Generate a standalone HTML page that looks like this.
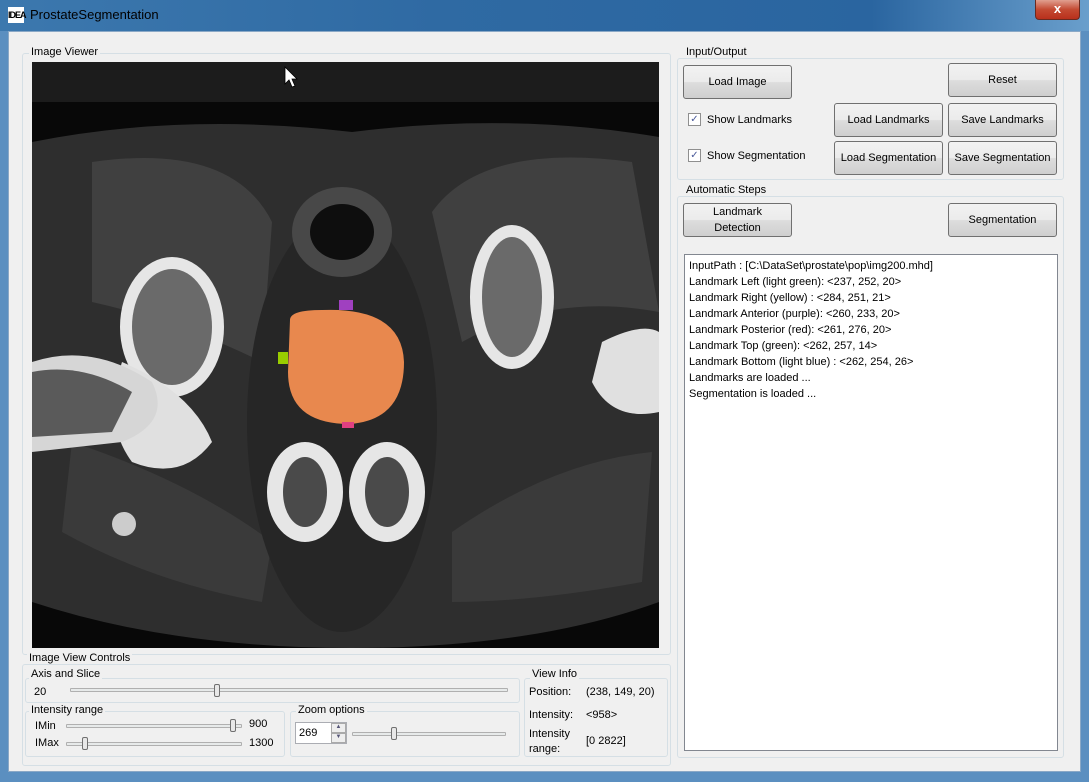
<!DOCTYPE html>
<html><head><style>
*{margin:0;padding:0;box-sizing:border-box}
body{width:1089px;height:782px;overflow:hidden;background:#5b8fc0;font-family:"Liberation Sans",sans-serif;font-size:11px;color:#000;position:relative}
.abs{position:absolute}
.title{left:0;top:0;width:1089px;height:31px;background:linear-gradient(90deg,#3c78ae 0%,#2f6aa3 40%,#2a65a0 80%,#6a9fcc 100%)}
.client{left:8px;top:31px;width:1073px;height:741px;background:#f0f0f0;border:1px solid #8aa8c6}
.grp{position:absolute;border:1px solid #d5dfe5;border-radius:3px}
.lbl{position:absolute;background:#f0f0f0;padding:0 2px;white-space:nowrap}
.btn{position:absolute;border:1px solid #707070;border-radius:3px;background:linear-gradient(#f2f2f2 0%,#ebebeb 50%,#dddddd 51%,#cfcfcf 100%);text-align:center;display:flex;align-items:center;justify-content:center;line-height:16px}
.chk{position:absolute;width:13px;height:13px;border:1px solid #8f8f8f;background:#fff;font-size:10px;line-height:11px;text-align:center;color:#4a5a9a}
.track{position:absolute;height:4px;border:1px solid #b0b0b0;background:#e7eaea;border-radius:1px}
.thumb{position:absolute;width:6px;height:13px;border:1px solid #707070;background:#e8e8e8;border-radius:2px}
.t{position:absolute;white-space:nowrap}
</style></head><body>
<div class="abs title"></div>
<div class="abs" style="left:8px;top:7px;width:16px;height:16px;background:#fff;font:bold 9px 'Liberation Sans';letter-spacing:-1px;line-height:16px;color:#000">IDEA</div>
<div class="t" style="left:30px;top:7px;font-size:13px;color:#000">ProstateSegmentation</div>
<div class="abs" style="left:1035px;top:0;width:45px;height:20px;background:linear-gradient(#e0a090,#c44a32 50%,#b8301c);border:1px solid #6a2a20;border-top:none;border-radius:0 0 4px 4px;color:#fff;font-weight:bold;text-align:center;line-height:18px;font-size:13px">x</div>
<div class="abs client"></div>

<div class="grp" style="left:22px;top:53px;width:649px;height:602px"></div>
<div class="lbl" style="left:29px;top:46px">Image Viewer</div>
<svg class="abs" style="left:32px;top:62px" width="627" height="586" viewBox="0 0 627 586">
<rect width="627" height="586" fill="#080808"/>
<rect x="0" y="0" width="627" height="40" fill="#1c1c1c"/>
<path d="M0 80 Q150 50 320 70 Q480 50 627 75 L627 540 Q500 586 320 586 Q140 586 0 540Z" fill="#2e2e2e"/>
<path d="M60 100 Q200 80 240 160 L230 300 Q150 260 60 240Z" fill="#404040"/>
<path d="M400 150 Q450 80 600 100 L627 250 Q520 230 430 280Z" fill="#404040"/>
<path d="M40 380 Q160 420 240 480 L230 540 Q120 520 30 470Z" fill="#3a3a3a"/>
<path d="M420 470 Q520 400 620 390 L610 520 Q500 540 420 540Z" fill="#3a3a3a"/>
<ellipse cx="310" cy="360" rx="95" ry="210" fill="#262626"/>
<ellipse cx="310" cy="170" rx="50" ry="45" fill="#484848"/>
<ellipse cx="310" cy="170" rx="32" ry="28" fill="#0e0e0e"/>
<ellipse cx="140" cy="265" rx="52" ry="70" fill="#e6e6e6"/>
<ellipse cx="140" cy="265" rx="40" ry="58" fill="#6a6a6a"/>
<path d="M90 300 Q160 330 180 380 Q150 420 100 400 Q70 360 90 300Z" fill="#e0e0e0"/>
<path d="M0 300 Q60 280 120 320 Q140 360 90 380 L0 390Z" fill="#d6d6d6"/>
<path d="M0 310 Q50 300 100 330 L80 370 L0 375Z" fill="#5a5a5a"/>
<ellipse cx="480" cy="235" rx="42" ry="72" fill="#e6e6e6"/>
<ellipse cx="480" cy="235" rx="30" ry="60" fill="#6a6a6a"/>
<path d="M570 280 Q610 260 627 270 L627 350 Q580 360 560 320Z" fill="#e0e0e0"/>
<ellipse cx="273" cy="430" rx="38" ry="50" fill="#e6e6e6"/>
<ellipse cx="273" cy="430" rx="22" ry="35" fill="#4a4a4a"/>
<ellipse cx="355" cy="430" rx="38" ry="50" fill="#e6e6e6"/>
<ellipse cx="355" cy="430" rx="22" ry="35" fill="#4a4a4a"/>
<circle cx="92" cy="462" r="12" fill="#ccc"/>
<path d="M258 258 Q258 248 290 248 Q370 245 372 300 Q372 358 318 362 Q256 362 256 310Z" fill="#e8884e"/>
<rect x="307" y="238" width="14" height="10" fill="#a040c0"/>
<rect x="246" y="290" width="10" height="12" fill="#9c0"/>
<rect x="310" y="360" width="12" height="6" fill="#e04080"/>
<path d="M253 5 L253 22 L257 18 L260 25 L263 24 L260 17 L265 17Z" fill="#fff" stroke="#000" stroke-width="0.8"/>
</svg>

<div class="grp" style="left:22px;top:664px;width:649px;height:102px"></div>
<div class="lbl" style="left:27px;top:652px">Image View Controls</div>
<div class="grp" style="left:25px;top:678px;width:495px;height:25px"></div>
<div class="lbl" style="left:29px;top:668px">Axis and Slice</div>
<div class="t" style="left:34px;top:686px">20</div>
<div class="track" style="left:70px;top:688px;width:438px"></div>
<div class="thumb" style="left:214px;top:684px"></div>
<div class="grp" style="left:25px;top:711px;width:260px;height:46px"></div>
<div class="lbl" style="left:29px;top:704px">Intensity range</div>
<div class="t" style="left:35px;top:720px">IMin</div>
<div class="t" style="left:35px;top:737px">IMax</div>
<div class="track" style="left:66px;top:724px;width:176px"></div>
<div class="thumb" style="left:230px;top:719px"></div>
<div class="track" style="left:66px;top:742px;width:176px"></div>
<div class="thumb" style="left:82px;top:737px"></div>
<div class="t" style="left:249px;top:718px">900</div>
<div class="t" style="left:249px;top:737px">1300</div>
<div class="grp" style="left:290px;top:711px;width:230px;height:46px"></div>
<div class="lbl" style="left:296px;top:704px">Zoom options</div>
<div class="abs" style="left:295px;top:722px;width:52px;height:22px;background:#fff;border:1px solid #abadb3"></div>
<div class="t" style="left:299px;top:727px">269</div>
<div class="abs" style="left:331px;top:723px;width:15px;height:10px;border:1px solid #aaa;background:#eee;font-size:6px;text-align:center;color:#557">▲</div>
<div class="abs" style="left:331px;top:733px;width:15px;height:10px;border:1px solid #aaa;background:#eee;font-size:6px;text-align:center;color:#557">▼</div>
<div class="track" style="left:352px;top:732px;width:154px"></div>
<div class="thumb" style="left:391px;top:727px"></div>
<div class="grp" style="left:524px;top:678px;width:144px;height:79px"></div>
<div class="lbl" style="left:530px;top:668px">View Info</div>
<div class="t" style="left:529px;top:686px">Position:</div>
<div class="t" style="left:586px;top:686px">(238, 149, 20)</div>
<div class="t" style="left:529px;top:709px">Intensity:</div>
<div class="t" style="left:586px;top:709px">&lt;958&gt;</div>
<div class="t" style="left:529px;top:727px;line-height:15px">Intensity<br>range:</div>
<div class="t" style="left:586px;top:735px">[0 2822]</div>

<div class="grp" style="left:677px;top:58px;width:387px;height:122px"></div>
<div class="lbl" style="left:684px;top:46px">Input/Output</div>
<div class="btn" style="left:683px;top:65px;width:109px;height:34px">Load Image</div>
<div class="btn" style="left:948px;top:63px;width:109px;height:34px">Reset</div>
<div class="chk" style="left:688px;top:113px">✓</div>
<div class="t" style="left:707px;top:114px">Show Landmarks</div>
<div class="chk" style="left:688px;top:149px">✓</div>
<div class="t" style="left:707px;top:150px">Show Segmentation</div>
<div class="btn" style="left:834px;top:103px;width:109px;height:34px">Load Landmarks</div>
<div class="btn" style="left:948px;top:103px;width:109px;height:34px">Save Landmarks</div>
<div class="btn" style="left:834px;top:141px;width:109px;height:34px">Load Segmentation</div>
<div class="btn" style="left:948px;top:141px;width:109px;height:34px">Save Segmentation</div>
<div class="grp" style="left:677px;top:196px;width:387px;height:562px"></div>
<div class="lbl" style="left:684px;top:184px">Automatic Steps</div>
<div class="btn" style="left:683px;top:203px;width:109px;height:34px">Landmark<br>Detection</div>
<div class="btn" style="left:948px;top:203px;width:109px;height:34px">Segmentation</div>
<div class="abs" style="left:684px;top:254px;width:374px;height:497px;background:#fff;border:1px solid #828790;padding:3px 4px;line-height:16px">
InputPath : [C:\DataSet\prostate\pop\img200.mhd]<br>
Landmark Left (light green): &lt;237, 252, 20&gt;<br>
Landmark Right (yellow) : &lt;284, 251, 21&gt;<br>
Landmark Anterior (purple): &lt;260, 233, 20&gt;<br>
Landmark Posterior (red): &lt;261, 276, 20&gt;<br>
Landmark Top (green): &lt;262, 257, 14&gt;<br>
Landmark Bottom (light blue) : &lt;262, 254, 26&gt;<br>
Landmarks are loaded ...<br>
Segmentation is loaded ...
</div>
</body></html>
